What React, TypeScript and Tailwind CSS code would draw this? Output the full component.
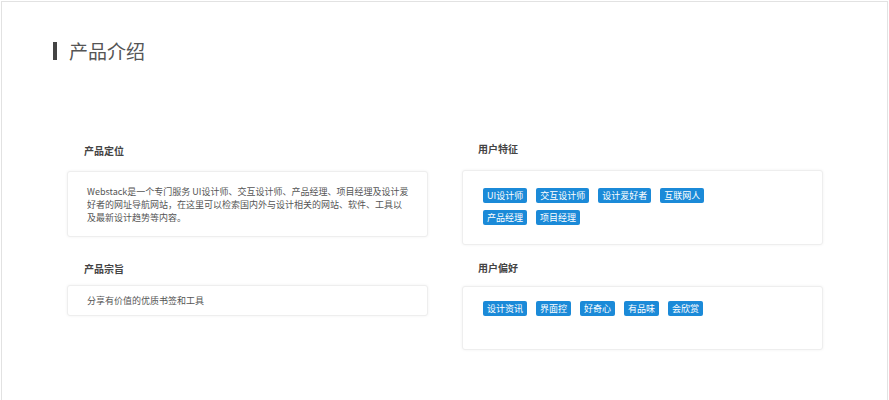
const F = { fontFamily: '"Noto Sans CJK SC", "Liberation Sans", sans-serif' };

function Tag({ t }: { t: string }) {
  return <span className="bg-[#1b8ad8] text-white text-[9px] leading-[15px] px-[4px] rounded-[2px]">{t}</span>;
}

function Card({ children, cls }: { children: React.ReactNode; cls: string }) {
  return <div className={`bg-white rounded-[3px] border border-[#eeeeee] shadow-[0_0_3px_rgba(0,0,0,0.06)] ${cls}`}>{children}</div>;
}

export default function App() {
  return (
    <div style={F} className="w-[889px] h-[400px] bg-white overflow-hidden">
      <div className="w-[887px] h-[400px] ml-px mt-px border-l border-t border-r border-[#e2e2e2] pt-[37px]">
        <div className="flex items-center ml-[51px] h-[24px]">
          <div className="w-[4px] h-[18px] bg-[#444]" />
          <div className="ml-[12px] text-[19px] text-[#555] leading-[24px]">产品介绍</div>
        </div>
        <div className="flex gap-[34px] ml-[65px] mt-[78px]">
          <div className="w-[361px]">
            <div className="ml-[17px] text-[10px] font-bold text-[#444] h-[16px] leading-[16px] mt-[2px]">产品定位</div>
            <Card cls="mt-[12px] h-[66px] px-[19px] pt-[13px]">
              <p className="text-[9px] leading-[13px] text-[#555] w-[322px]">Webstack是一个专门服务 UI设计师、交互设计师、产品经理、项目经理及设计爱好者的网址导航网站，在这里可以检索国内外与设计相关的网站、软件、工具以及最新设计趋势等内容。</p>
            </Card>
            <div className="ml-[17px] text-[10px] font-bold text-[#444] h-[16px] leading-[16px] mt-[24px]">产品宗旨</div>
            <Card cls="mt-[8px] h-[31px] px-[19px] flex items-center">
              <p className="text-[9px] text-[#555]">分享有价值的优质书签和工具</p>
            </Card>
          </div>
          <div className="w-[361px]">
            <div className="ml-[16px] text-[10px] font-bold text-[#444] h-[16px] leading-[16px]">用户特征</div>
            <Card cls="mt-[13px] h-[75px] px-[20px] pt-[17px]">
              <div className="flex flex-wrap gap-x-[9px] gap-y-[7px] w-[260px]">
                {["UI设计师", "交互设计师", "设计爱好者", "互联网人", "产品经理", "项目经理"].map(t => <Tag key={t} t={t} />)}
              </div>
            </Card>
            <div className="ml-[16px] text-[10px] font-bold text-[#444] h-[16px] leading-[16px] mt-[15px]">用户偏好</div>
            <Card cls="mt-[10px] h-[64px] px-[20px] pt-[14px]">
              <div className="flex gap-x-[9px]">
                {["设计资讯", "界面控", "好奇心", "有品味", "会欣赏"].map(t => <Tag key={t} t={t} />)}
              </div>
            </Card>
          </div>
        </div>
      </div>
    </div>
  );
}
